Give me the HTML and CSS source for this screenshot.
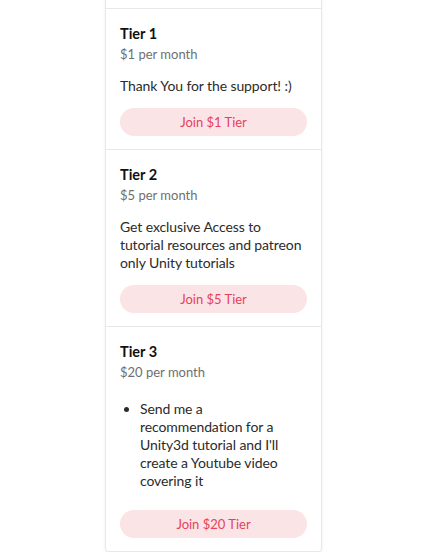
FILE: index.html
```html
<!DOCTYPE html>
<html>
<head>
<meta charset="utf-8">
<link rel="stylesheet" href="styles.css">
</head>
<body>
<div class="card">
  <div class="tier tier-cut"></div>
  <div class="tier">
    <div class="tier-name">Tier 1</div>
    <div class="tier-price">$1 per month</div>
    <div class="tier-desc">Thank You for the support! :)</div>
    <button class="join">Join $1 Tier</button>
  </div>
  <div class="tier">
    <div class="tier-name">Tier 2</div>
    <div class="tier-price">$5 per month</div>
    <div class="tier-desc">Get exclusive Access to tutorial resources and patreon only Unity tutorials</div>
    <button class="join">Join $5 Tier</button>
  </div>
  <div class="tier">
    <div class="tier-name">Tier 3</div>
    <div class="tier-price">$20 per month</div>
    <div class="tier-desc">
      <ul class="perks">
        <li>Send me a recommendation for a Unity3d tutorial and I'll create a Youtube video covering it</li>
      </ul>
    </div>
    <button class="join join-last">Join $20 Tier</button>
  </div>
</div>
</body>
</html>
```
FILE: styles.css
```css
html, body {
  margin: 0;
  padding: 0;
  background: #ffffff;
}
body {
  font-family: Lato, "Noto Sans", sans-serif;
  color: #241e12;
}
.card {
  margin-left: 105px;
  width: 217px;
  box-sizing: border-box;
  border: 1px solid #e8e8e8;
  border-top: none;
  border-radius: 0 0 4px 4px;
  box-shadow: 0 1px 3px rgba(0,0,0,0.07);
}
.tier {
  padding: 15px 14px 13px 14px;
  border-bottom: 1px solid #e8e8e8;
  display: flex;
  flex-direction: column;
}
.tier:last-child {
  border-bottom: none;
}
.tier-cut {
  height: 9px;
  padding: 0;
  box-sizing: border-box;
}
.tier-name {
  font-size: 14.5px;
  font-weight: 700;
  line-height: 20px;
  color: #111111;
}
.tier-price {
  font-size: 13px;
  line-height: 20px;
  color: #6f6f6f;
}
.tier-desc {
  margin-top: 13px;
  font-size: 14px;
  letter-spacing: -0.1px;
  line-height: 18px;
  color: #2b2b2b;
}
.perks {
  margin: 5px 0 0 0;
  padding-left: 20px;
}
.join {
  margin-top: 13px;
  height: 28px;
  border: none;
  border-radius: 14px;
  background: #fbe4e6;
  color: #e8415c;
  font-family: inherit;
  font-size: 13px;
  padding: 0;
}
.join-last {
  margin-top: 20px;
}
```
